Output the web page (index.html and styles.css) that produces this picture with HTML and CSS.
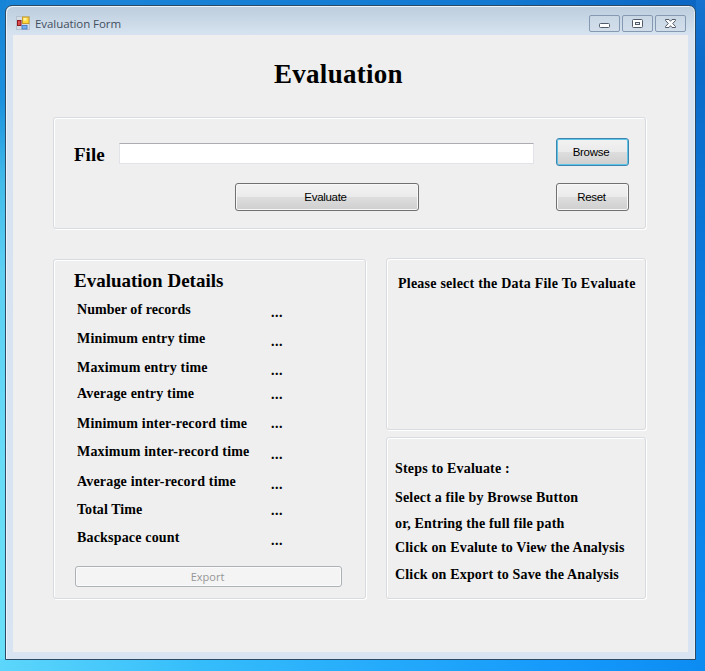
FILE: index.html
```html
<!DOCTYPE html>
<html lang="en">
<head>
<meta charset="utf-8">
<title>Evaluation Form</title>
<link rel="stylesheet" href="styles.css">
</head>
<body>
<div class="window">
  <header class="titlebar">
    <svg class="app-icon" width="14" height="14" viewBox="0 0 14 14">
      <rect x=".5" y=".5" width="13" height="13" fill="#d3dce5" stroke="#b5c1ce"/>
      <rect x="1.5" y="4.500" width="3.500" height="5" fill="#d94c50" stroke="#8d1b20"/>
      <rect x="6.500" y="1" width="6.500" height="6.500" fill="#ffd83c" stroke="#c79b2a"/>
      <rect x="7.500" y="2" width="3" height="2.500" fill="#fff3a8"/>
      <rect x="6" y="9.500" width="5" height="3.500" fill="#72aef0" stroke="#4f80c4"/>
    </svg>
    <span class="caption">Evaluation Form</span>
    <div class="controls">
      <span class="control"><svg width="29" height="15" viewBox="0 0 29 15"><rect x="9.500" y="7.500" width="10" height="4" rx="1" fill="#fff" stroke="#535a68"/></svg></span>
      <span class="control"><svg width="29" height="15" viewBox="0 0 29 15"><rect x="9.500" y="3.500" width="10" height="8" rx="1" fill="#fff" stroke="#535a68"/><rect x="12.500" y="6.500" width="4" height="2" fill="#e8eef5" stroke="#535a68"/></svg></span>
      <span class="control"><svg width="29" height="15" viewBox="0 0 29 15"><path d="M9.500 3.500H13L14.500 5.300L16 3.500H19.500V4.500L16.700 7.500L19.500 10.500V11.500H16L14.500 9.700L13 11.500H9.500V10.500L12.300 7.500L9.500 4.500Z" fill="#fff" stroke="#535a68"/></svg></span>
    </div>
  </header>
  <main class="client">
    <h1>Evaluation</h1>
    <section class="group file-group">
      <label class="file-label" for="file">File</label>
      <input class="file-input" id="file" type="text">
      <button class="button browse">Browse</button>
      <button class="button evaluate">Evaluate</button>
      <button class="button reset">Reset</button>
    </section>
    <div class="columns">
      <section class="group details">
        <h2>Evaluation Details</h2>
        <dl>
          <dt class="tight">Number of records</dt><dd class="low">...</dd>
          <dt>Minimum entry time</dt><dd class="low">...</dd>
          <dt>Maximum entry time</dt><dd class="low">...</dd>
          <dt>Average entry time</dt><dd class="mid">...</dd>
          <dt>Minimum inter-record time</dt><dd>...</dd>
          <dt>Maximum inter-record time</dt><dd class="low">...</dd>
          <dt>Average inter-record time</dt><dd class="low">...</dd>
          <dt class="tight">Total Time</dt><dd class="mid">...</dd>
          <dt>Backspace count</dt><dd class="low">...</dd>
        </dl>
        <button class="export" disabled>Export</button>
      </section>
      <div class="side">
        <section class="group message">Please select the Data File To Evaluate</section>
        <section class="group steps">
          <span>Steps to Evaluate :</span>
          <span>Select a file by Browse Button</span>
          <span>or, Entring the full file path</span>
          <span>Click on Evalute to View the Analysis</span>
          <span>Click on Export to Save the Analysis</span>
        </section>
      </div>
    </div>
  </main>
</div>
</body>
</html>
```

FILE: styles.css
```css
* { box-sizing: border-box; }

body {
  margin: 0;
  height: 671px;
  padding: 5px 9px 11px 5px;
  overflow: hidden;
  background:
    linear-gradient(#1673d0, #0a6bc9 10%, #0b7add 45%, #0c8cf2 100%) right / 9px 100% no-repeat,
    linear-gradient(90deg, #5cd6fb, #35bdfb 28%, #1599fb 80%, #0c8cf2) bottom / 100% 12px no-repeat,
    linear-gradient(#1684d6, #1c91de 15%, #42bbea 27%, #5ccff3 40%, #68dcf7 70%, #68dff9) left / 6px 100% no-repeat,
    linear-gradient(90deg, #1a86d8, #1279d2 70%, #0b66c2);
}

.window {
  height: 655px;
  padding: 0 7px 7px 6px;
  border: 1px solid #2c4a63;
  border-radius: 7px 7px 0 0;
  background: linear-gradient(#bccddd, #d7e3f0 29px, #d9e4f2);
  box-shadow: inset 1px 1px #edf4fa, inset -1px 0 #e0ecf6;
}

.titlebar {
  display: flex;
  height: 29px;
  padding: 10px 2px 0 4px;
}

.app-icon { flex: none; }

.caption {
  margin-left: 5px;
  font: 11.5px/16px "Open Sans", sans-serif;
  color: #434f5e;
  letter-spacing: -.07px;
}

.controls {
  display: flex;
  gap: 2px;
  margin: -1px 0 0 auto;
}

.control {
  width: 31px;
  height: 17px;
  border: 1px solid #8599b2;
  border-radius: 2px;
  background: linear-gradient(#c9d7e5, #d2deea);
}

.control svg { display: block; }

.client {
  height: 617px;
  margin-left: 1px;
  padding: 20px 42px 0 40px;
  background: #efefef;
  color: #000;
  font: bold 14px/18px "Liberation Serif", serif;
}

h1 {
  margin: 0 0 0 221px;
  height: 62px;
  font-size: 27px;
  line-height: 38px;
  letter-spacing: .28px;
}

.group {
  border: 1px solid #d8dce0;
  border-radius: 3px;
  box-shadow: inset 1px 1px #fff, 1px 1px #fff;
}

.file-group {
  display: grid;
  grid-template-columns: 46px 415px 22px 73px;
  grid-template-rows: 28px 28px;
  row-gap: 17px;
  height: 112px;
  padding: 20px 0 0 19px;
}

.file-label {
  padding-left: 1px;
  font-size: 19px;
  line-height: 33px;
}

.file-input {
  height: 21px;
  margin-top: 5px;
  border: 1px solid #e2e3e8;
  border-top-color: #abadb3;
  background: #fff;
}

.button {
  padding: 0;
  border: 1px solid #707070;
  border-radius: 3px;
  background: linear-gradient(#f2f2f2, #ebebeb 48%, #dddddd 52%, #cfcfcf);
  box-shadow: inset 0 0 0 1px #f8f8f8;
  font: 11.5px/26px "Liberation Sans", sans-serif;
  letter-spacing: -.3px;
  color: #000;
}

.browse {
  grid-column: 4;
  border-color: #3c85ad;
  box-shadow: inset 0 0 0 1px #5fc4e8;
  padding-right: 3px;
}

.evaluate {
  grid-column: 2;
  width: 184px;
  margin-left: 116px;
  padding-right: 3px;
}

.reset { grid-column: 4; padding-right: 2px; }

.columns {
  display: flex;
  justify-content: space-between;
  margin-top: 29px;
}

.details {
  width: 313px;
  height: 340px;
  margin-top: 1px;
  padding: 10px 20px 0;
}

h2 {
  margin: 0;
  height: 31px;
  font-size: 19px;
  line-height: 21px;
}

dl {
  display: grid;
  grid-template-columns: 194px 1fr;
  grid-template-rows: 29px 29px 26px 30px 28px 30px 28px 28px 37px;
  margin: 0 0 0 3px;
  letter-spacing: .18px;
}

.tight { letter-spacing: .05px; }

dd { margin: 0; letter-spacing: .5px; }
.low { padding-top: 3px; }
.mid { padding-top: 1px; }

.export {
  display: block;
  width: 267px;
  height: 21px;
  margin-left: 1px;
  padding: 0 2px 0 0;
  border: 1px solid #adb2b5;
  border-radius: 3px;
  background: #f4f4f4;
  box-shadow: inset 0 0 0 1px #fbfbfb;
  font: 11px/18px "Open Sans", sans-serif;
  color: #969696;
}

.side {
  display: grid;
  grid-template-rows: 172px 162px;
  row-gap: 7px;
  width: 260px;
}

.message {
  padding: 16px 0 0 11px;
  letter-spacing: .23px;
  white-space: nowrap;
}

.steps {
  display: grid;
  grid-template-rows: 29px 26px 24px 27px 18px;
  padding: 22px 0 0 8px;
  letter-spacing: .17px;
  white-space: nowrap;
}
```
